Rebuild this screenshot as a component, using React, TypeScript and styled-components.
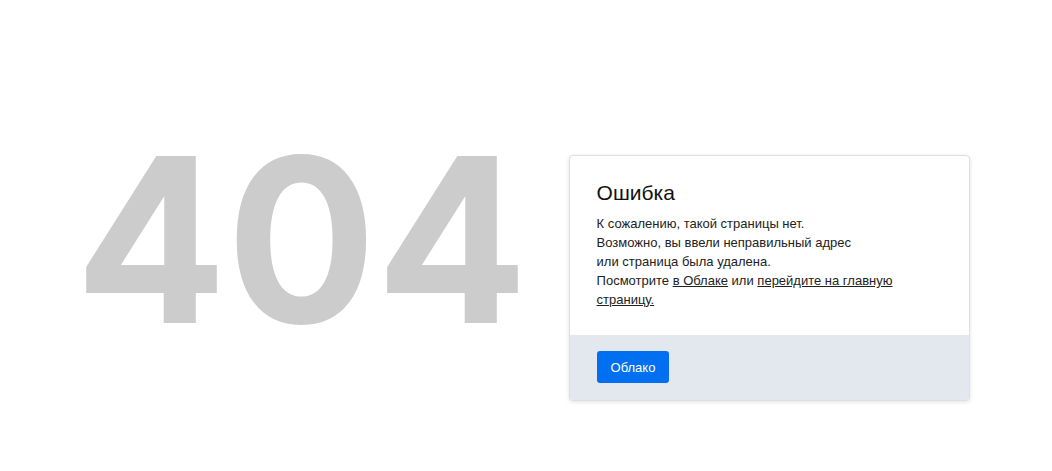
import styled, { createGlobalStyle } from 'styled-components';

const GlobalStyle = createGlobalStyle`
  html, body {
    margin: 0;
    padding: 0;
    background: #ffffff;
    font-family: "Liberation Sans", Arial, sans-serif;
  }
`;

const App = () => {
  return (
    <>
      <GlobalStyle />
      <Page>
        <Code>404</Code>
        <Card>
          <CardBody>
            <Title>Ошибка</Title>
            <Text>
              К сожалению, такой страницы нет.
              <br />
              Возможно, вы ввели неправильный адрес
              <br />
              или страница была удалена.
              <br />
              Посмотрите <TextLink href='#'>в Облаке</TextLink> или{' '}
              <TextLink href='#'>перейдите на главную страницу.</TextLink>
            </Text>
          </CardBody>
          <CardFooter>
            <Button type='button'>Облако</Button>
          </CardFooter>
        </Card>
      </Page>
    </>
  );
};

export default App;

const Page = styled.main`
  display: flex;
  justify-content: center;
  align-items: flex-start;
  gap: 42px;
  height: 471px;
  box-sizing: border-box;
  padding: 128px 6px 0 0;
`;

const Code = styled.div`
  font-family: Inter, "DejaVu Sans", sans-serif;
  font-weight: 600;
  font-size: 224px;
  line-height: 224px;
  letter-spacing: 2px;
  margin-right: -2px;
  color: #cccccc;
  -webkit-text-stroke: 4px #cccccc;
  user-select: none;
`;

const Card = styled.section`
  width: 401px;
  margin-top: 27px;
  box-sizing: border-box;
  border: 1px solid #dcdfe3;
  border-radius: 4px;
  overflow: hidden;
  background: #ffffff;
  box-shadow: 0 1px 4px rgba(0, 0, 0, 0.12);
`;

const CardBody = styled.div`
  padding: 24px 27px 26px;
`;

const Title = styled.h1`
  margin: 0 0 8px;
  font-size: 21px;
  line-height: 26px;
  font-weight: normal;
  color: #111111;
`;

const Text = styled.p`
  margin: 0;
  font-size: 13px;
  line-height: 19px;
  color: #222222;
`;

const TextLink = styled.a`
  color: #222222;
  text-decoration: underline;
`;

const CardFooter = styled.div`
  background: #e3e8ef;
  padding: 16px 27px 17px;
`;

const Button = styled.button`
  display: block;
  height: 32px;
  padding: 0 14px;
  border: none;
  border-radius: 3px;
  background: #0070f0;
  color: #ffffff;
  font-family: "Liberation Sans", Arial, sans-serif;
  font-size: 13px;
  cursor: pointer;
`;
